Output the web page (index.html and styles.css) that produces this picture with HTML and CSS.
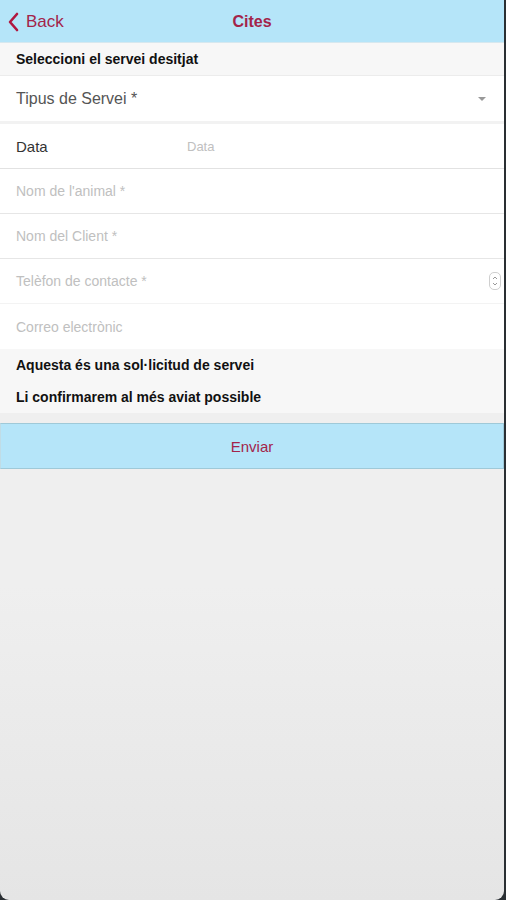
FILE: index.html
```html
<html lang="en">

<head>
    <meta charset="UTF-8">
    <meta name="viewport" content="width=device-width, initial-scale=1.0">
    <title>Cites</title>
    <link rel="stylesheet" href="styles.css">
</head>

<body>
    <div class="app">
        <div class="topbar">
            <a class="back" href="#">
                <svg class="chevron" width="12" height="20" viewBox="0 0 12 20">
                    <path d="M10 2 L3 10 L10 18" fill="none" stroke="#b0173f" stroke-width="2.6" stroke-linecap="round" stroke-linejoin="round"/>
                </svg>
                Back
            </a>
            <div class="title">Cites</div>
        </div>

        <div class="section-head">Seleccioni el servei desitjat</div>

        <div class="row select-row">
            <span class="select-label">Tipus de Servei *</span>
            <span class="caret"></span>
        </div>

        <div class="row date-row">
            <span class="date-label">Data</span>
            <span class="placeholder small">Data</span>
        </div>

        <div class="row line">
            <span class="placeholder">Nom de l'animal *</span>
        </div>
        <div class="row line">
            <span class="placeholder">Nom del Client *</span>
        </div>
        <div class="row line phone-row">
            <span class="placeholder">Telèfon de contacte *</span>
            <span class="spinner">
                <svg width="8" height="14" viewBox="0 0 8 14">
                    <path d="M2 5 L4 3 L6 5" fill="none" stroke="#999" stroke-width="1"/>
                    <path d="M2 9 L4 11 L6 9" fill="none" stroke="#999" stroke-width="1"/>
                </svg>
            </span>
        </div>
        <div class="row">
            <span class="placeholder">Correo electrònic</span>
        </div>

        <div class="info">
            <p>Aquesta és una sol·licitud de servei</p>
            <p>Li confirmarem al més aviat possible</p>
        </div>

        <div class="actions">
            <button class="send">Enviar</button>
        </div>
    </div>
</body>
</html>
```

FILE: styles.css
```css
body {
    margin: 0;
    background-color: #2a2f33;
    font-family: 'Liberation Sans', Arial, sans-serif;
}

* {
    box-sizing: border-box;
}

.app {
    width: 504px;
    height: 900px;
    background: linear-gradient(#efefef 65%, #e5e5e5);
    border-radius: 0 0 9px 9px;
    overflow: hidden;
}

.topbar {
    height: 43px;
    padding-top: 2px;
    background-color: #b5e5f9;
    display: flex;
    align-items: center;
    position: relative;
    border-bottom: 1px solid #d6e8ef;
}

.back {
    display: flex;
    align-items: center;
    gap: 7px;
    padding-left: 7px;
    color: #a3244a;
    font-size: 17px;
    text-decoration: none;
}

.title {
    position: absolute;
    left: 0;
    right: 0;
    text-align: center;
    color: #a3244a;
    font-size: 16px;
    font-weight: bold;
    pointer-events: none;
}

.section-head {
    height: 33px;
    background-color: #f7f7f7;
    padding: 0 16px;
    display: flex;
    align-items: center;
    font-size: 14px;
    font-weight: bold;
    color: #111;
    border-bottom: 1px solid #ececec;
}

.row {
    height: 45px;
    background-color: #fff;
    padding: 0 16px;
    display: flex;
    align-items: center;
}

.line {
    border-bottom: 1px solid #e6e6e6;
}

.select-row {
    height: 48px;
    justify-content: space-between;
    border-bottom: 3px solid #f2f2f2;
}

.select-label {
    font-size: 16px;
    color: #555;
}

.caret {
    width: 0;
    height: 0;
    border-left: 4px solid transparent;
    border-right: 4px solid transparent;
    border-top: 4px solid #999;
    margin-right: 2px;
}

.date-row {
    border-bottom: 1px solid #e2e2e2;
}

.date-label {
    width: 171px;
    font-size: 15px;
    color: #333;
}

.placeholder {
    font-size: 14px;
    color: #c0c0c0;
}

.placeholder.small {
    font-size: 13px;
}

.phone-row {
    justify-content: space-between;
    padding-right: 3px;
    border-bottom-color: #f3f3f3;
}

.spinner {
    width: 12px;
    height: 18px;
    border: 1px solid #cfcfcf;
    border-radius: 5px;
    display: flex;
    align-items: center;
    justify-content: center;
}

.info {
    background-color: #f7f7f7;
    padding: 0 16px;
}

.info p {
    margin: 0;
    height: 32px;
    display: flex;
    align-items: center;
    font-size: 14px;
    font-weight: bold;
    color: #111;
}

.actions {
    padding-top: 10px;
}

.send {
    display: block;
    width: 100%;
    height: 46px;
    margin: 0;
    background-color: #b5e5f9;
    border: 1px solid #9fc9d8;
    border-left-color: #c0dce6;
    color: #a3244a;
    font-family: inherit;
    font-size: 15px;
    cursor: pointer;
}
```
